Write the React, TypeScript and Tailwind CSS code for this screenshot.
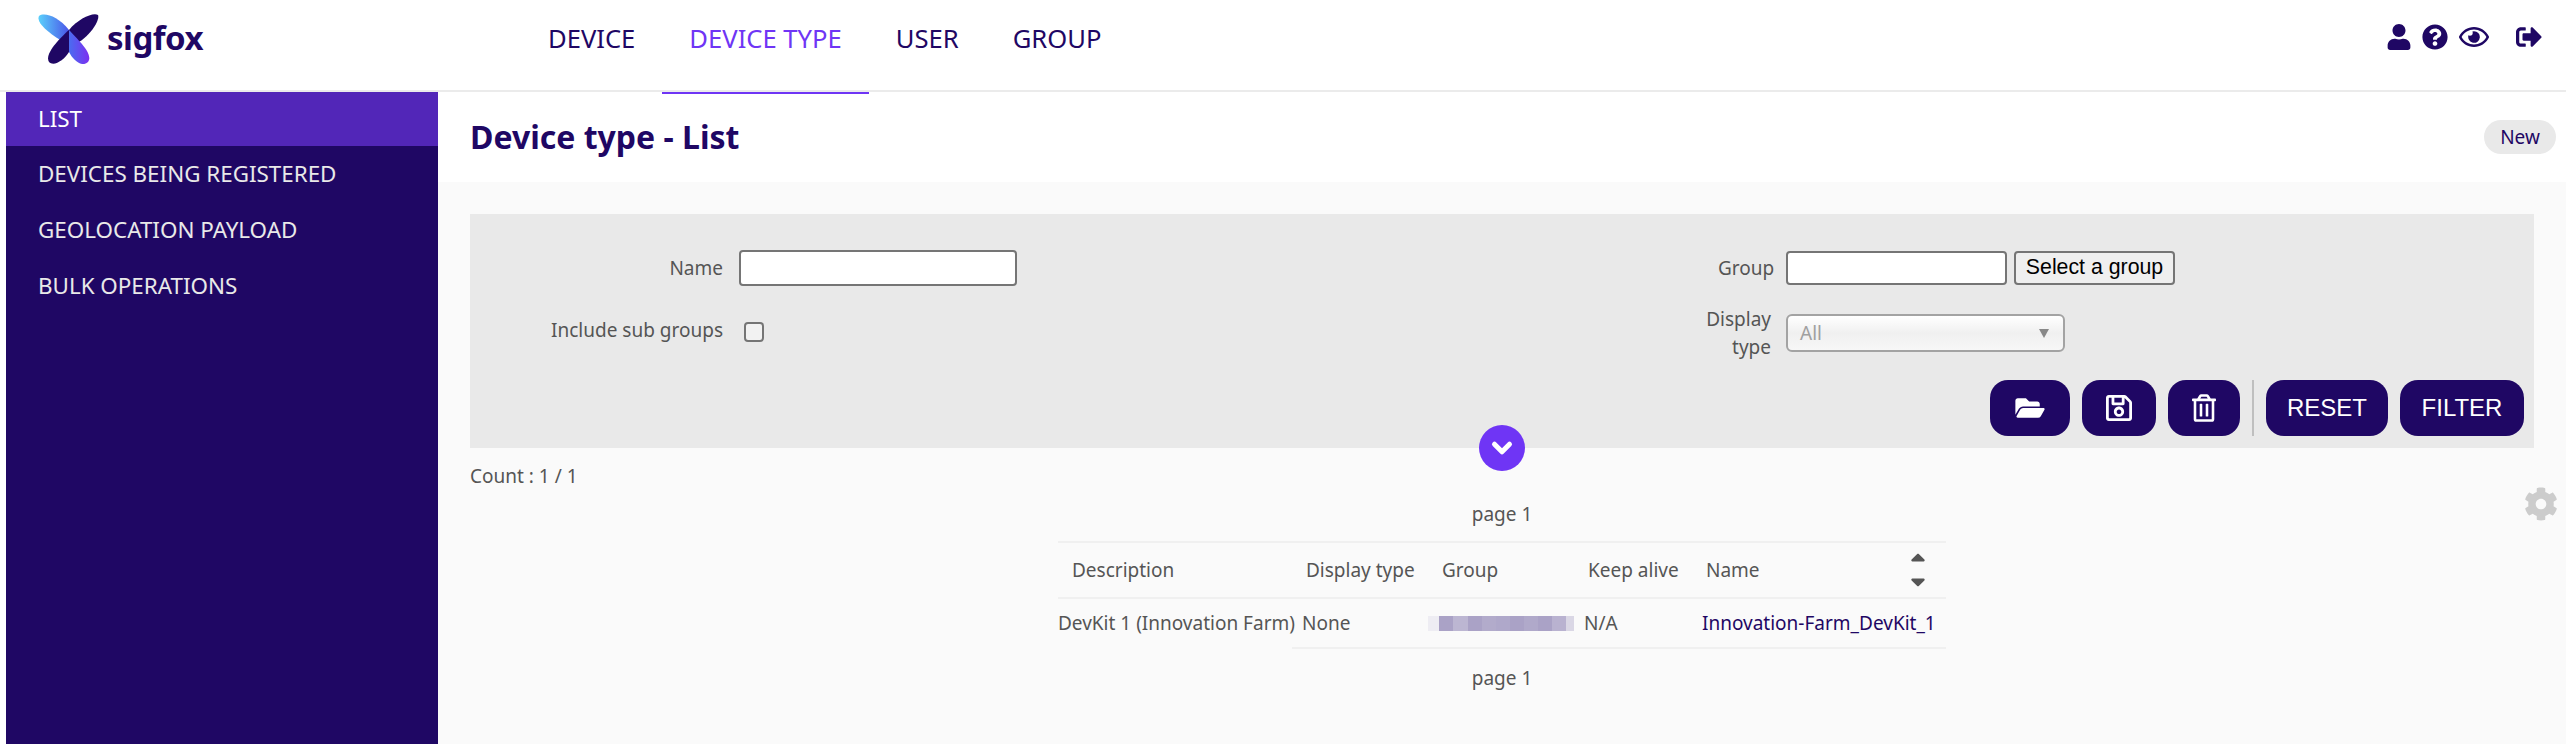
import { ChevronDown } from 'lucide-react';
import {
  FaCog,
  FaFolderOpen,
  FaQuestionCircle,
  FaRegEye,
  FaRegSave,
  FaRegTrashAlt,
  FaSignOutAlt,
  FaSortDown,
  FaSortUp,
  FaUser,
} from 'react-icons/fa';

const font = "font-['Noto_Sans','Liberation_Sans',sans-serif]";

const navItems = ['DEVICE', 'DEVICE TYPE', 'USER', 'GROUP'];
const sideItems = ['LIST', 'DEVICES BEING REGISTERED', 'GEOLOCATION PAYLOAD', 'BULK OPERATIONS'];

// pixelated blur over the group name
const blurCells = [
  'w-[12px] bg-[#eeedf3]',
  'w-[15px] bg-[#aaa2c6]',
  'w-[15px] bg-[#bcb6d2]',
  'w-[15px] bg-[#aaa2c6]',
  'w-[15px] bg-[#b2abcb]',
  'w-[15px] bg-[#afa8ca]',
  'w-[15px] bg-[#aaa2c6]',
  'w-[15px] bg-[#b0a9ca]',
  'w-[15px] bg-[#aaa2c6]',
  'w-[15px] bg-[#b9b2d0]',
  'w-[8px] bg-[#dad7e5]',
];

function Logo() {
  return (
    <div className="flex items-center">
      <svg width="62" height="50" viewBox="0 0 62 50" className="block">
        <defs>
          <linearGradient id="wingA" x1="0" y1="0" x2="1" y2="0">
            <stop offset="0" stopColor="#5bd0fb" />
            <stop offset="1" stopColor="#4a55e8" />
          </linearGradient>
          <linearGradient id="wingB" x1="0" y1="0" x2="1" y2="0">
            <stop offset="0" stopColor="#4a6cf0" />
            <stop offset="1" stopColor="#7b2ff0" />
          </linearGradient>
        </defs>
        <path d="M1 2C6-2 20 2 31 16V31C18 24 -3 10 1 2Z" fill="url(#wingA)" />
        <path d="M60 1C63 8 44 32 31 31L31 16C40 5 55-2 60 1Z" fill="#1f0764" />
        <path d="M31 16C22 24 6 40 11 48C16 53 26 46 31 38Z" fill="#1f0764" />
        <path d="M31 16C40 26 56 40 50 48C44 54 35 46 31 38Z" fill="url(#wingB)" />
      </svg>
      <span className="ml-[7px] font-['Noto_Sans',sans-serif] text-[33px] leading-none font-bold tracking-[-0.5px] text-[#1f0764] pb-[4px]">
        sigfox
      </span>
    </div>
  );
}

function IconButton({ children, width }: { children: React.ReactNode; width: string }) {
  return (
    <button type="button" className={`flex h-[56px] items-center justify-center rounded-[18px] bg-[#1f0764] text-white ${width}`}>
      {children}
    </button>
  );
}

export default function App() {
  return (
    <div className={`flex h-[744px] w-[2566px] flex-col overflow-hidden bg-white ${font}`}>
      <header className="flex h-[92px] shrink-0 border-b-2 border-[#ebebeb]">
        <div className="w-[521px] shrink-0 pl-[38px] pt-[14px]">
          <Logo />
        </div>
        <nav className="flex h-[92px]">
          {navItems.map((item) => (
            <a
              key={item}
              className={
                item === 'DEVICE TYPE'
                  ? 'flex h-[94px] items-start border-b-2 border-[#6f35f5] px-[27px] pt-[22px] text-[25.6px] leading-[34px] text-[#6f35f5]'
                  : 'flex h-[92px] items-start px-[27px] pt-[22px] text-[25.6px] leading-[34px] text-[#1f0764]'
              }
            >
              {item}
            </a>
          ))}
        </nav>
        <div className="ml-auto flex items-start pr-[24px] pt-[24px] text-[#1f0764]">
          <FaUser className="h-[26px] w-[24px]" />
          <FaQuestionCircle className="ml-[11px] h-[26px] w-[26px]" />
          <FaRegEye className="ml-[11px] mt-[-2px] h-[30px] w-[30px]" />
          <FaSignOutAlt className="ml-[27px] h-[26px] w-[26px]" />
        </div>
      </header>

      <div className="flex min-h-0 flex-1">
        <div className="w-[6px] shrink-0" />
        <aside className="w-[432px] shrink-0 bg-[#1f0764]">
          {sideItems.map((item) => (
            <a
              key={item}
              className={
                item === 'LIST'
                  ? 'flex h-[54px] items-center bg-[#5226b8] pl-[32px] text-[22.4px] text-white'
                  : 'flex h-[56px] items-center pl-[32px] text-[22.4px] text-[#e9e9e9]'
              }
            >
              {item}
            </a>
          ))}
        </aside>

        <main className="flex min-w-0 flex-1 flex-col">
          <div className="flex h-[90px] shrink-0 items-center justify-between pl-[32px] pr-[10px]">
            <h1 className="text-[32px] font-bold text-[#1f0764]">Device type - List</h1>
            <button type="button" className="flex h-[34px] w-[72px] items-center justify-center rounded-[17px] bg-[#e9e9e9] text-[19px] text-[#1f0764]">
              New
            </button>
          </div>

          <div className="relative flex-1 bg-[#fafafa] pl-[32px] pr-[32px] pt-[32px]">
            <section className="relative h-[234px] bg-[#e9e9e9] text-[19px] text-[#555]">
              <div className="grid grid-cols-2 pt-[36px]">
                <div>
                  <div className="flex h-[36px] items-center">
                    <label className="w-[269px] pr-[16px] text-right">Name</label>
                    <input type="text" className="h-[36px] w-[278px] rounded-[4px] border-2 border-[#757575] bg-white" />
                  </div>
                  <div className="mt-[28px] flex h-[32px] items-center">
                    <label className="w-[269px] pr-[16px] text-right">Include sub groups</label>
                    <input type="checkbox" className="ml-[5px] mt-[4px] h-[20px] w-[20px] appearance-none rounded-[4px] border-2 border-[#757575] bg-[#f2f2f2]" />
                  </div>
                </div>
                <div className="pl-[216px]">
                  <div className="flex h-[36px] items-center">
                    <label className="w-[53px] shrink-0 text-right">Group</label>
                    <input type="text" className="ml-[15px] h-[34px] w-[221px] rounded-[4px] border-2 border-[#757575] bg-white" />
                    <button type="button" className="ml-[7px] h-[34px] w-[161px] rounded-[4px] border-2 border-[#757575] bg-[#efefef] font-['Liberation_Sans',sans-serif] text-[21.3px] leading-none text-black">
                      Select a group
                    </button>
                  </div>
                  <div className="ml-[-54px] mt-[28px] flex h-[38px] items-center">
                    <label className="w-[107px] shrink-0 text-right">Display type</label>
                    <div className="ml-[15px] flex h-[38px] w-[279px] items-center justify-between rounded-[6px] border-2 border-[#a3a3a3] bg-linear-to-b from-white via-[#f0f0f0] to-[#f7f7f7] pl-[12px] pr-[14px] text-[#a0a0a0]">
                      <span>All</span>
                      <span className="h-0 w-0 border-x-[5px] border-t-[9px] border-x-transparent border-t-[#888]" />
                    </div>
                  </div>
                </div>
              </div>

              <div className="absolute bottom-[12px] right-[10px] flex h-[56px] items-center">
                <IconButton width="w-[80px]"><FaFolderOpen className="h-[26px] w-[32px]" /></IconButton>
                <div className="w-[12px]" />
                <IconButton width="w-[74px]"><FaRegSave className="h-[30px] w-[26px]" /></IconButton>
                <div className="w-[12px]" />
                <IconButton width="w-[72px]"><FaRegTrashAlt className="h-[30px] w-[24px]" /></IconButton>
                <div className="mx-[12px] h-[56px] w-[2px] bg-[#bfbfbf]" />
                <button type="button" className="h-[56px] w-[122px] rounded-[18px] bg-[#1f0764] font-['Liberation_Sans',sans-serif] text-[24px] text-white">RESET</button>
                <button type="button" className="ml-[12px] h-[56px] w-[124px] rounded-[18px] bg-[#1f0764] font-['Liberation_Sans',sans-serif] text-[24px] text-white">FILTER</button>
              </div>

              <button type="button" className="absolute bottom-[-23px] left-[1009px] flex h-[46px] w-[46px] items-center justify-center rounded-full bg-[#6f35f5] text-white">
                <ChevronDown className="h-[30px] w-[30px]" strokeWidth={4} />
              </button>
            </section>

            <div className="mt-[14px] flex h-[28px] items-center text-[19px] text-[#555]">Count : 1 / 1</div>
            <FaCog className="absolute right-[8px] top-[305px] h-[34px] w-[34px] text-[#cccccc]" />

            <div className="flex flex-col items-center text-[19px] text-[#555]">
              <div className="mt-[10px] flex h-[28px] items-center">page 1</div>
              <table className="mt-[13px] w-[888px] table-fixed border-collapse">
                <colgroup>
                  <col className="w-[234px]" />
                  <col className="w-[136px]" />
                  <col className="w-[146px]" />
                  <col className="w-[118px]" />
                  <col className="w-[254px]" />
                </colgroup>
                <thead>
                  <tr className="h-[56px] border-y-2 border-[#f0f0f0] text-left">
                    <th className="pl-[14px] font-normal">Description</th>
                    <th className="pl-[14px] font-normal">Display type</th>
                    <th className="pl-[14px] font-normal">Group</th>
                    <th className="pl-[14px] font-normal">Keep alive</th>
                    <th className="pl-[14px] font-normal">
                      <div className="flex items-center justify-between pr-[20px]">
                        Name
                        <span className="flex flex-col text-[#555]">
                          <FaSortUp className="mb-[-16px] h-[24px] w-[16px]" />
                          <FaSortDown className="mt-[6px] h-[24px] w-[16px]" />
                        </span>
                      </div>
                    </th>
                  </tr>
                </thead>
                <tbody>
                  <tr className="h-[50px]">
                    <td className="whitespace-nowrap">DevKit 1 (Innovation Farm)</td>
                    <td className="border-b-2 border-[#f0f0f0] pl-[10px]">None</td>
                    <td className="border-b-2 border-[#f0f0f0]">
                      <div className="flex h-[15px] items-stretch">
                        {blurCells.map((cell, i) => (
                          <div key={i} className={cell} />
                        ))}
                      </div>
                    </td>
                    <td className="border-b-2 border-[#f0f0f0] pl-[10px]">N/A</td>
                    <td className="border-b-2 border-[#f0f0f0] pl-[10px] text-[#1f0764]">Innovation-Farm_DevKit_1</td>
                  </tr>
                </tbody>
              </table>
              <div className="mt-[15px] flex h-[28px] items-center">page 1</div>
            </div>
          </div>
        </main>
      </div>
    </div>
  );
}
